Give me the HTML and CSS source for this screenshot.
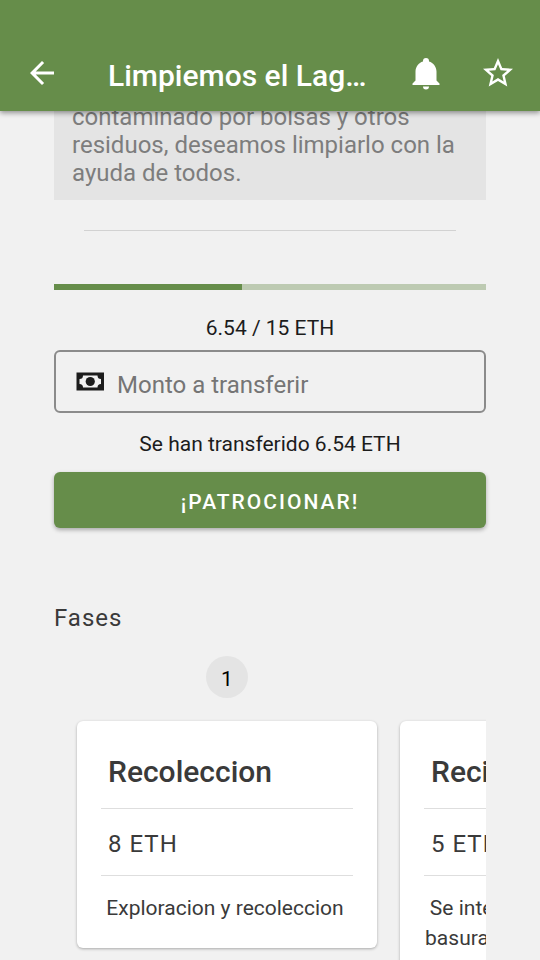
FILE: index.html
```html
<!DOCTYPE html>
<html lang="es">
<head>
<meta charset="utf-8">
<meta name="viewport" content="width=device-width, initial-scale=1">
<title>Limpiemos el Lago</title>
<link rel="stylesheet" href="styles.css">
</head>
<body>
<header class="app-bar">
  <button class="icon-button" type="button" aria-label="Volver">
    <svg class="icon" viewBox="0 0 24 24"><path d="M20 11H7.83l5.59-5.59L12 4l-8 8 8 8 1.41-1.41L7.83 13H20v-2z"/></svg>
  </button>
  <h1 class="app-title">Limpiemos el Lag…</h1>
  <button class="icon-button" type="button" aria-label="Notificaciones">
    <svg class="icon" viewBox="0 0 24 24"><path d="M21,19V20H3V19L5,17V11C5,7.9 7.03,5.17 10,4.29C10,4.19 10,4.1 10,4A2,2 0 0,1 12,2A2,2 0 0,1 14,4C14,4.1 14,4.19 14,4.29C16.97,5.17 19,7.9 19,11V17L21,19M14,21A2,2 0 0,1 12,23A2,2 0 0,1 10,21"/></svg>
  </button>
  <button class="icon-button" type="button" aria-label="Favorito">
    <svg class="icon" viewBox="0 0 24 24"><path d="M12,15.39L8.24,17.66L9.23,13.38L5.91,10.5L10.29,10.13L12,6.09L13.71,10.13L18.09,10.5L14.77,13.38L15.76,17.66M22,9.24L14.81,8.63L12,2L9.19,8.63L2,9.24L7.45,13.97L5.82,21L12,17.27L18.18,21L16.54,13.97L22,9.24Z"/></svg>
  </button>
</header>
<main class="content">
  <p class="description">contaminado por bolsas y otros residuos, deseamos limpiarlo con la ayuda de todos.</p>
  <hr class="divider">
  <div class="progress" role="progressbar" aria-label="Fondos recaudados" aria-valuemin="0" aria-valuemax="15" aria-valuenow="6.54">
    <div class="progress-fill" style="width: 43.6%"></div>
  </div>
  <p class="amount">6.54 / 15 ETH</p>
  <label class="field">
    <svg class="cash" viewBox="0 0 28 19"><path fill-rule="evenodd" d="M0.500 0.500H28V18.500H0.500ZM7 3.500A3.500 3.500 0 0 1 3.500 7V12A3.500 3.500 0 0 1 7 15.500H21.500A3.500 3.500 0 0 1 25 12V7A3.500 3.500 0 0 1 21.500 3.500Z"/><circle cx="14.250" cy="9.500" r="4.600"/></svg>
    <input class="field-input" type="text" inputmode="decimal" placeholder="Monto a transferir" aria-label="Monto a transferir">
  </label>
  <p class="amount">Se han transferido 6.54 ETH</p>
  <button class="primary" type="button">¡PATROCIONAR!</button>
  <h2 class="section-title">Fases</h2>
  <div class="phases">
    <section class="phase">
      <span class="step">1</span>
      <article class="card">
        <h3 class="card-title">Recoleccion</h3>
        <p class="card-cost">8 ETH</p>
        <p class="card-text">Exploracion y recoleccion</p>
      </article>
    </section>
    <section class="phase">
      <span class="step">2</span>
      <article class="card">
        <h3 class="card-title">Reciclaje</h3>
        <p class="card-cost">5 ETH</p>
        <p class="card-text">Se intenta reciclar toda la basura que es recolectada</p>
      </article>
    </section>
  </div>
</main>
</body>
</html>
```
FILE: styles.css
```css
* {
  box-sizing: border-box;
}

html,
body {
  height: 100%;
}

body {
  margin: 0;
  display: flex;
  flex-direction: column;
  background: #f1f1f1;
  color: #1c1c1c;
  font-family: Roboto, "Liberation Sans", sans-serif;
  font-size: 21px;
  line-height: 30px;
}

h1,
h2,
h3,
p {
  margin: 0;
}

button {
  border: 0;
  font: inherit;
}

.app-bar {
  position: relative;
  z-index: 1;
  flex: none;
  display: flex;
  align-items: center;
  gap: 36px;
  padding: 37px 24px 2px;
  background: #668d4a;
  color: #fff;
  box-shadow: 0 2px 5px rgba(0, 0, 0, 0.4);
}

.icon-button {
  flex: none;
  padding: 0;
  background: none;
  color: inherit;
}

.icon {
  display: block;
  width: 36px;
  height: 36px;
  fill: currentColor;
}

.app-title {
  flex: 1;
  padding: 21px 0 15px;
  margin-left: 12px;
  font-size: 30px;
  line-height: 36px;
  font-weight: 500;
  white-space: nowrap;
  overflow: hidden;
}

.content {
  flex: 1;
  min-height: 0;
  margin-top: -8px;
  padding: 0 54px;
  overflow-y: auto;
  scrollbar-width: none;
}

.description {
  padding: 0 18px 13px;
  background: #e4e4e4;
  color: #7d7d7d;
  font-size: 24px;
  line-height: 28px;
}

.divider {
  height: 1px;
  margin: 30px 30px 53px;
  border: 0;
  background: #d2d2d2;
}

.progress {
  height: 6px;
  margin-bottom: 23px;
  background: #bdcab2;
}

.progress-fill {
  height: 100%;
  background: #668d4a;
}

.amount {
  text-align: center;
}

.field {
  display: flex;
  align-items: center;
  gap: 13px;
  height: 63px;
  margin: 7px 0 16px;
  padding: 0 20px;
  border: 2px solid #8b8b8b;
  border-radius: 6px;
}

.cash {
  flex: none;
  width: 28px;
  height: 19px;
  fill: #1c1c1c;
}

.field-input {
  flex: 1;
  min-width: 0;
  padding: 6px 0 0;
  border: 0;
  outline: 0;
  background: none;
  color: inherit;
  font: inherit;
  font-size: 24px;
}

.field-input::placeholder {
  color: #757575;
  opacity: 1;
}

.primary {
  width: 100%;
  height: 56px;
  margin-top: 13px;
  padding: 4px 0 0;
  border-radius: 6px;
  background: #668d4a;
  color: #fff;
  font-weight: 500;
  letter-spacing: 2px;
  box-shadow: 0 2px 4px rgba(0, 0, 0, 0.3);
}

.section-title {
  margin: 75px 0 23px;
  color: #3a3a3a;
  font-size: 24px;
  font-weight: 400;
  letter-spacing: 1px;
}

.phases {
  display: flex;
  align-items: flex-start;
  gap: 23px;
  padding: 0 23px 24px;
  overflow-x: auto;
  scrollbar-width: none;
}

.phase {
  flex: none;
  display: flex;
  flex-direction: column;
  align-items: center;
  gap: 23px;
  width: 300px;
}

.step {
  width: 42px;
  height: 42px;
  padding-top: 2px;
  border-radius: 50%;
  background: #e4e4e4;
  color: #000;
  line-height: 42px;
  text-align: center;
}

.card {
  width: 100%;
  padding: 24px 24px 25px;
  border-radius: 6px;
  background: #fff;
  color: #3a3a3a;
  box-shadow: 0 1px 3px rgba(0, 0, 0, 0.3);
}

.card-title {
  padding: 9px 7px 18px;
  border-bottom: 1px solid #dedede;
  font-size: 30px;
  line-height: 36px;
  font-weight: 500;
}

.card-cost {
  padding: 20px 7px 16px;
  border-bottom: 1px solid #dedede;
  font-size: 24px;
  letter-spacing: 1px;
}

.card-text {
  padding: 17px 4px 0 0;
  text-align: center;
}
```
